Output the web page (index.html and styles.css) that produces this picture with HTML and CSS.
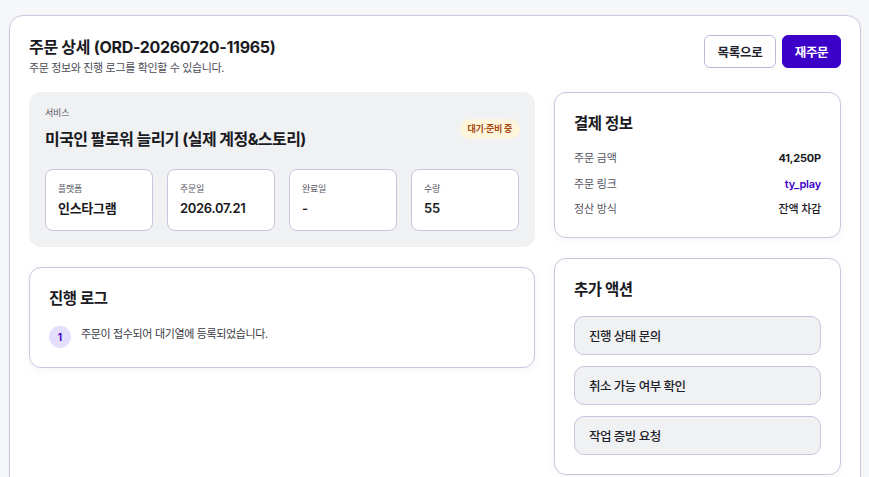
FILE: index.html
```html
<!DOCTYPE html>
<html lang="ko">
<head>
<meta charset="utf-8">
<title>주문 상세</title>
<link rel="stylesheet" href="styles.css">
</head>
<body>
<main class="panel">
  <header class="panel-head">
    <div class="head-text">
      <h1 class="page-title">주문 상세 (ORD-20260720-11965)</h1>
      <p class="page-sub">주문 정보와 진행 로그를 확인할 수 있습니다.</p>
    </div>
    <div class="head-actions">
      <button class="btn btn-outline">목록으로</button>
      <button class="btn btn-primary">재주문</button>
    </div>
  </header>

  <div class="layout">
    <div class="col">
      <section class="service">
        <div class="service-top">
          <div>
            <div class="service-label">서비스</div>
            <h2 class="service-name">미국인 팔로워 늘리기 (실제 계정&amp;스토리)</h2>
          </div>
          <span class="badge">대기·준비 중</span>
        </div>
        <div class="stats">
          <div class="stat"><div class="stat-label">플랫폼</div><div class="stat-value">인스타그램</div></div>
          <div class="stat"><div class="stat-label">주문일</div><div class="stat-value">2026.07.21</div></div>
          <div class="stat"><div class="stat-label">완료일</div><div class="stat-value">-</div></div>
          <div class="stat"><div class="stat-label">수량</div><div class="stat-value">55</div></div>
        </div>
      </section>

      <section class="card log-card">
        <h3 class="card-title">진행 로그</h3>
        <ol class="log">
          <li class="log-item"><span class="step">1</span><span class="log-text">주문이 접수되어 대기열에 등록되었습니다.</span></li>
        </ol>
      </section>
    </div>

    <div class="col">
      <section class="card pay-card">
        <h3 class="card-title">결제 정보</h3>
        <dl class="rows">
          <div class="row"><dt>주문 금액</dt><dd class="strong">41,250P</dd></div>
          <div class="row"><dt>주문 링크</dt><dd class="link">ty_play</dd></div>
          <div class="row"><dt>정산 방식</dt><dd>잔액 차감</dd></div>
        </dl>
      </section>

      <section class="card action-card">
        <h3 class="card-title">추가 액션</h3>
        <div class="actions">
          <button class="action">진행 상태 문의</button>
          <button class="action">취소 가능 여부 확인</button>
          <button class="action">작업 증빙 요청</button>
        </div>
      </section>
    </div>
  </div>
</main>
</body>
</html>
```

FILE: styles.css
```css
* { box-sizing: border-box; }

html, body {
  margin: 0;
  background: #f6f7f9;
  font-family: "Inter", "Noto Sans CJK KR", sans-serif;
  color: #1a1a1f;
}

body {
  padding: 15px 8px 0 9px;
  height: 477px;
  overflow: hidden;
}

.panel {
  background: #fff;
  border: 1px solid #cdc9e2;
  border-radius: 14px;
  padding: 19px 19px 40px;
  min-height: 600px;
  box-shadow: 0 1px 4px rgba(30, 20, 80, 0.04);
}

.panel-head {
  display: flex;
  justify-content: space-between;
  align-items: flex-start;
  margin-bottom: 16px;
}

.page-title {
  margin: 0;
  font-size: 16px;
  line-height: 24px;
  font-weight: 700;
  letter-spacing: -0.3px;
}

.page-sub {
  margin: 1px 0 0;
  font-size: 11px;
  line-height: 16px;
  color: #4b4b55;
  letter-spacing: -0.35px;
}

.head-actions {
  display: flex;
  gap: 6px;
}

.btn {
  height: 33px;
  border-radius: 6px;
  font-family: inherit;
  font-size: 12.5px;
  font-weight: 600;
  padding: 0;
  white-space: nowrap;
  letter-spacing: -0.3px;
  cursor: pointer;
}

.btn-outline {
  width: 72px;
  background: #fff;
  border: 1px solid #bdb8d8;
  color: #22222a;
}

.btn-primary {
  width: 59px;
  background: #3d00c9;
  border: 1px solid #3d00c9;
  color: #fff;
}

.layout {
  display: grid;
  grid-template-columns: 506px 287px;
  column-gap: 19px;
  align-items: start;
}

.col {
  display: flex;
  flex-direction: column;
  gap: 20px;
}

/* service summary block */
.service {
  background: #f0f1f3;
  border-radius: 12px;
  padding: 14px 16px 16px;
}

.service-top {
  display: flex;
  justify-content: space-between;
  align-items: center;
}

.service-label {
  font-size: 9px;
  line-height: 14px;
  color: #555560;
  letter-spacing: -0.2px;
}

.service-name {
  margin: 7px 0 0;
  font-size: 16px;
  line-height: 24px;
  font-weight: 700;
  letter-spacing: -0.55px;
}

.badge {
  margin-right: -1px;
  height: 20px;
  padding: 0 8px;
  border-radius: 10px;
  background: #fdf6dc;
  color: #a7480f;
  font-size: 9px;
  font-weight: 600;
  line-height: 20px;
  letter-spacing: -0.3px;
}

.stats {
  margin-top: 18px;
  display: grid;
  grid-template-columns: repeat(4, 1fr);
  gap: 14px;
}

.stat {
  background: #fff;
  border: 1px solid #c9c5df;
  border-radius: 8px;
  padding: 12px;
  height: 62px;
}

.stat-label {
  font-size: 9px;
  line-height: 14px;
  color: #555560;
  letter-spacing: -0.3px;
}

.stat-value {
  margin-top: 3px;
  font-size: 13px;
  line-height: 18px;
  font-weight: 600;
  color: #1a1a1f;
  letter-spacing: -0.3px;
}

/* generic card */
.card {
  background: #fff;
  border: 1px solid #c9c5df;
  border-radius: 12px;
  padding: 20px 19px 19px;
  box-shadow: 0 2px 8px rgba(30, 20, 80, 0.05);
}

.card-title {
  margin: 0;
  font-size: 15.5px;
  line-height: 22px;
  font-weight: 700;
  letter-spacing: -0.4px;
}

.log {
  list-style: none;
  margin: 16px 0 0;
  padding: 0;
}

.log-item {
  display: flex;
  align-items: flex-start;
  gap: 10px;
}

.step {
  flex: none;
  width: 22px;
  height: 22px;
  border-radius: 50%;
  background: #e4defc;
  color: #3d00c9;
  font-size: 10px;
  font-weight: 700;
  line-height: 22px;
  text-align: center;
}

.log-text {
  font-size: 11px;
  line-height: 16px;
  color: #3a3a44;
  letter-spacing: -0.35px;
}

.rows {
  margin: 15px 0 0;
  display: flex;
  flex-direction: column;
  gap: 8.5px;
}

.row {
  display: flex;
  justify-content: space-between;
  font-size: 11px;
  line-height: 17px;
  letter-spacing: -0.2px;
}

.row dt { color: #55555f; }
.row dd { margin: 0; color: #1a1a1f; font-weight: 500; }
.row dd.strong { font-weight: 700; }
.row dd.link { color: #3d00c9; font-weight: 600; }

.actions {
  margin-top: 15px;
  display: flex;
  flex-direction: column;
  gap: 11px;
}

.action {
  height: 39px;
  text-align: left;
  padding: 0 14px;
  background: #f0f1f3;
  border: 1px solid #c9c5df;
  border-radius: 10px;
  font-family: inherit;
  font-size: 12.5px;
  font-weight: 500;
  letter-spacing: -0.5px;
  color: #22222a;
  cursor: pointer;
}
```
